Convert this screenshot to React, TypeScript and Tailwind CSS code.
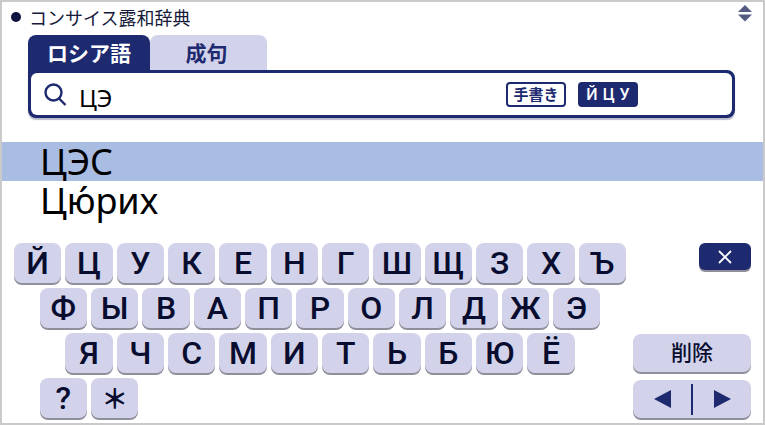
import React, { useState } from "react"

type Key = { label: string; start?: string }

const KEY_ROWS: Key[][] = [
  [..."ЙЦУКЕНГШЩЗХЪ"].map((label, i) => ({ label, start: i === 0 ? "col-start-1" : undefined })),
  [..."ФЫВАПРОЛДЖЭ"].map((label, i) => ({ label, start: i === 0 ? "col-start-2" : undefined })),
  [..."ЯЧСМИТЬБЮЁ"].map((label, i) => ({ label, start: i === 0 ? "col-start-3" : undefined })),
  [..."?＊"].map((label, i) => ({ label, start: i === 0 ? "col-start-2" : undefined })),
]

const WORDS = ["ЦЭС", "Цю́рих"]

const keyStyle = "rounded-lg bg-[#d2d3ea] text-[#080d30] shadow-[0_2px_0_#8f8f9b]"

const Header = () => (
  <header className="flex h-[33px] items-start justify-between pr-[11px] pl-[9px]">
    <h1 className="flex items-center gap-2 pt-[3px] text-[18px] leading-6 text-[#15193a]">
      <span className="h-[10px] w-[10px] rounded-full bg-[#0d1240]" />
      コンサイス露和辞典
    </h1>
    <button aria-label="スクロール" className="pt-[3px]">
      <svg width="14" height="17" viewBox="0 0 14 17" fill="#555b80">
        <path d="M7 0L14 7H0Z" />
        <path d="M0 9.5H14L7 16.5Z" />
      </svg>
    </button>
  </header>
)

const SearchBox = () => {
  const [query, setQuery] = useState("ЦЭ")

  return (
    <section className="mr-7 ml-[26px]">
      <div className="flex text-[21px] leading-[35px]">
        <button className="h-[35px] w-[122px] rounded-t-lg bg-[#1e2a70] font-bold text-white">ロシア語</button>
        <button className="h-[35px] w-[117px] rounded-t-lg bg-[#d2d3ea] pr-1 font-bold text-[#1e2a70]">成句</button>
      </div>
      <div className="flex h-12 items-center rounded-lg rounded-tl-none border-3 border-[#1e2a70] bg-[#1e2a70] shadow-[0_2px_1px_#b9bbcb]">
        <div className="flex h-full min-w-0 flex-1 items-center rounded-md bg-white pl-3">
          <svg width="24" height="24" viewBox="0 0 24 24" fill="none" stroke="#1e2a70" strokeWidth="2.4" className="shrink-0">
            <circle cx="10.5" cy="10.5" r="8" />
            <path d="M16 16.5L22.5 23" />
          </svg>
          <input
            aria-label="検索"
            value={query}
            onChange={(e) => setQuery(e.target.value)}
            className="min-w-0 flex-1 pt-2 pl-3 font-['Noto_Sans',sans-serif] text-[24px] leading-8 text-black outline-none"
          />
          <button className="flex h-[25px] w-[60px] items-center justify-center rounded border-2 border-[#1e2a70] text-[15px] leading-4 font-bold text-[#1e2a70]">
            手書き
          </button>
          <button className="mr-[94px] ml-3 flex h-[25px] w-[60px] items-center justify-center gap-[5px] rounded bg-[#1e2a70] pt-0.5 font-['Roboto','Noto_Sans_CJK_JP',sans-serif] text-[16px] font-medium text-white">
            <span>Й</span>
            <span>Ц</span>
            <span>У</span>
          </button>
        </div>
      </div>
    </section>
  )
}

const Keyboard = () => (
  <section className="flex gap-[5px] pr-3 pl-[10px]">
    <div className="grid flex-1 auto-rows-[40px] grid-cols-[repeat(24,minmax(0,1fr))] gap-y-[5px]">
      {KEY_ROWS.map((row) =>
        row.map(({ label, start }) => (
          <div key={label} className={`flex ${start ?? ""} col-end-[span_2] px-0.5`}>
            <button
              className={`flex-1 font-['Roboto','Noto_Sans_CJK_JP',sans-serif] text-[32px] leading-10 font-medium ${keyStyle}`}
            >
              {label === "＊" ? <span className="text-[27px] font-bold">＊</span> : label}
            </button>
          </div>
        ))
      )}
    </div>

    <div className="flex w-[118px] flex-col">
      <button
        aria-label="閉じる"
        className="flex h-[27px] w-[52px] items-center justify-center self-end rounded-md bg-[#1e2a70] shadow-[0_2px_0_#8f8f9b]"
      >
        <svg width="14" height="14" viewBox="0 0 14 14" stroke="white" strokeWidth="1.8">
          <path d="M1 1L13 13M13 1L1 13" />
        </svg>
      </button>
      <button className={`mt-auto h-[38px] pb-1 text-[21px] leading-[34px] font-medium ${keyStyle}`}>削除</button>
      <div className={`mt-2 flex h-[38px] items-center ${keyStyle}`}>
        <button aria-label="左" className="flex flex-1 justify-center">
          <svg width="17" height="18" viewBox="0 0 17 18" fill="#1e2a70">
            <path d="M17 0V18L0 9Z" />
          </svg>
        </button>
        <span className="h-[31px] w-0.5 bg-[#1e2a70]" />
        <button aria-label="右" className="flex flex-1 justify-center">
          <svg width="17" height="18" viewBox="0 0 17 18" fill="#1e2a70">
            <path d="M0 0V18L17 9Z" />
          </svg>
        </button>
      </div>
    </div>
  </section>
)

const App = () => {
  return (
    <main className="border-2 border-[#cacaca] bg-white pb-[5px] font-['Noto_Sans_CJK_JP',sans-serif]">
      <Header />
      <SearchBox />

      {/* Results */}
      <ul className="mt-6 mb-[23px] font-['Noto_Sans',sans-serif] text-[36px] leading-[39px] text-black">
        {WORDS.map((word, i) => (
          <li key={word} className={`h-[39px] pl-[38px] ${i === 0 ? "bg-[#a9bce2]" : ""}`}>
            {word}
          </li>
        ))}
      </ul>

      <Keyboard />
    </main>
  )
}

export default App
